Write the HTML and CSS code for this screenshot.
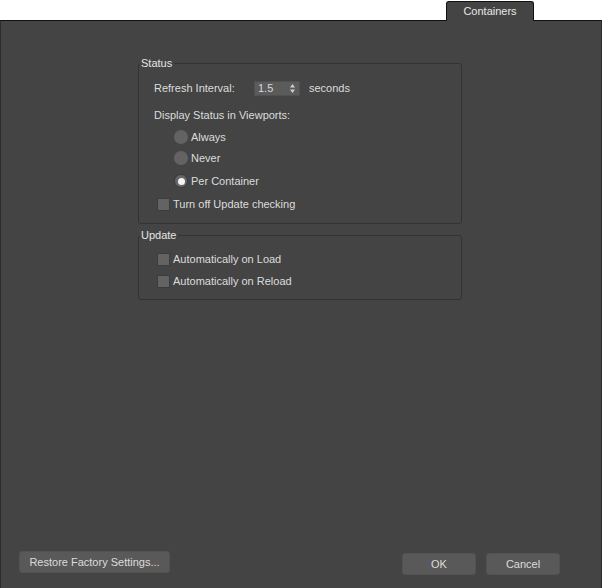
FILE: index.html
```html
<!DOCTYPE html>
<html>
<head>
<meta charset="utf-8">
<link rel="stylesheet" href="styles.css">
</head>
<body>
<div class="window">
  <div class="tabbar">
    <div class="tab">Containers</div>
  </div>
  <div class="panel">
    <div class="groups">
      <fieldset class="group status">
        <legend>Status</legend>
        <div class="content">
          <div class="row interval">
            <span class="label">Refresh Interval:</span>
            <span class="spinner"><span class="val">1.5</span><svg class="arrows" width="5" height="9" viewBox="0 0 5 9"><path d="M2.5 0 L5 3.5 L0 3.5 Z M0 5.5 L5 5.5 L2.5 9 Z" fill="#cfcfcf"/></svg></span>
            <span class="unit">seconds</span>
          </div>
          <div class="row display">Display Status in Viewports:</div>
          <div class="radios">
            <div class="radio"><span class="dot"></span>Always</div>
            <div class="radio"><span class="dot"></span>Never</div>
            <div class="radio checked"><span class="dot"></span>Per Container</div>
          </div>
          <div class="check"><span class="box"></span>Turn off Update checking</div>
        </div>
      </fieldset>
      <fieldset class="group update">
        <legend>Update</legend>
        <div class="content">
          <div class="check"><span class="box"></span>Automatically on Load</div>
          <div class="check"><span class="box"></span>Automatically on Reload</div>
        </div>
      </fieldset>
    </div>
    <div class="footer">
      <button class="btn restore">Restore Factory Settings...</button>
      <div class="right">
        <button class="btn ok">OK</button>
        <button class="btn cancel">Cancel</button>
      </div>
    </div>
  </div>
</div>
</body>
</html>
```
FILE: styles.css
```css
html, body {
  margin: 0;
  padding: 0;
  background: #ffffff;
}
body {
  font-family: "Liberation Sans", Arial, sans-serif;
  font-size: 11px;
  color: #dcdcdc;
}
.window {
  width: 602px;
  height: 588px;
  display: flex;
  flex-direction: column;
}
.tabbar {
  height: 20px;
  display: flex;
  justify-content: flex-end;
  padding-right: 68px;
  align-items: flex-end;
}
.tab {
  width: 86px;
  height: 19px;
  background: #444444;
  border: 1px solid #111111;
  border-bottom: none;
  border-radius: 3px 3px 0 0;
  text-align: center;
  line-height: 18px;
  color: #e8e8e8;
  position: relative;
  top: 1px;
  z-index: 1;
}
.panel {
  flex: 1;
  background: #444444;
  border-top: 1px solid #111111;
  border-left: 1px solid #2c2c2c;
  border-right: 1px solid #2c2c2c;
  display: flex;
  flex-direction: column;
  justify-content: space-between;
}
.groups {
  padding: 35px 0 0 137px;
  width: 324px;
}
.group {
  margin: 0;
  border: 1px solid #333333;
  border-radius: 3px;
  padding: 0;
  min-width: 0;
  box-sizing: border-box;
}
.group legend {
  padding: 0 2px 0 1px;
  margin-left: 1px;
  color: #e4e4e4;
  line-height: 14px;
}
.status {
  height: 168px;
}
.status .content {
  padding-left: 15px;
}
.row {
  display: flex;
  align-items: center;
}
.interval {
  margin-top: 11px;
  height: 14px;
}
.interval .label {
  width: 100px;
}
.spinner {
  width: 46px;
  height: 15px;
  background: #5b5b5b;
  border: 1px solid #505050;
  box-sizing: border-box;
  display: flex;
  align-items: center;
  justify-content: space-between;
  padding: 0 4px 0 3px;
  color: #d8d8d8;
}
.arrows {
  display: block;
}
.unit {
  margin-left: 9px;
}
.display {
  margin-top: 13px;
  height: 14px;
}
.radios {
  padding-left: 20px;
  margin-top: 8px;
}
.radio {
  display: flex;
  align-items: center;
  height: 14px;
  margin-bottom: 7px;
}
.radio:nth-child(3) {
  margin-top: 9px;
}
.dot {
  width: 14px;
  height: 14px;
  border-radius: 50%;
  background: #636363;
  box-sizing: border-box;
  margin-right: 3px;
  position: relative;
}
.checked .dot {
  border: 1px solid #383838;
  background: #666666;
}
.checked .dot::after {
  content: "";
  position: absolute;
  left: 2.5px;
  top: 2.5px;
  width: 7px;
  height: 7px;
  border-radius: 50%;
  background: #f4f4f4;
}
.check {
  display: flex;
  align-items: center;
  height: 14px;
}
.status .check {
  margin-top: 9px;
  margin-left: 3px;
}
.box {
  width: 13px;
  height: 13px;
  background: #636363;
  border: 1px solid #3c3c3c;
  box-sizing: border-box;
  margin-right: 3px;
}
.update {
  margin-top: 4px;
  height: 72px;
}
.update .content {
  padding-left: 18px;
}
.update .check {
  margin-top: 10px;
}
.update .check + .check {
  margin-top: 8px;
}
.footer {
  display: flex;
  justify-content: space-between;
  align-items: flex-end;
  padding: 0 41px 13px 18px;
}
.btn {
  font-family: "Liberation Sans", Arial, sans-serif;
  font-size: 11px;
  color: #dcdcdc;
  background: #595959;
  border: 1px solid #525252;
  border-radius: 3px;
  height: 22px;
  padding: 0;
  margin: 0;
}
.restore {
  width: 151px;
  margin-bottom: 2px;
}
.right {
  display: flex;
  gap: 10px;
}
.ok, .cancel {
  width: 74px;
}
```
